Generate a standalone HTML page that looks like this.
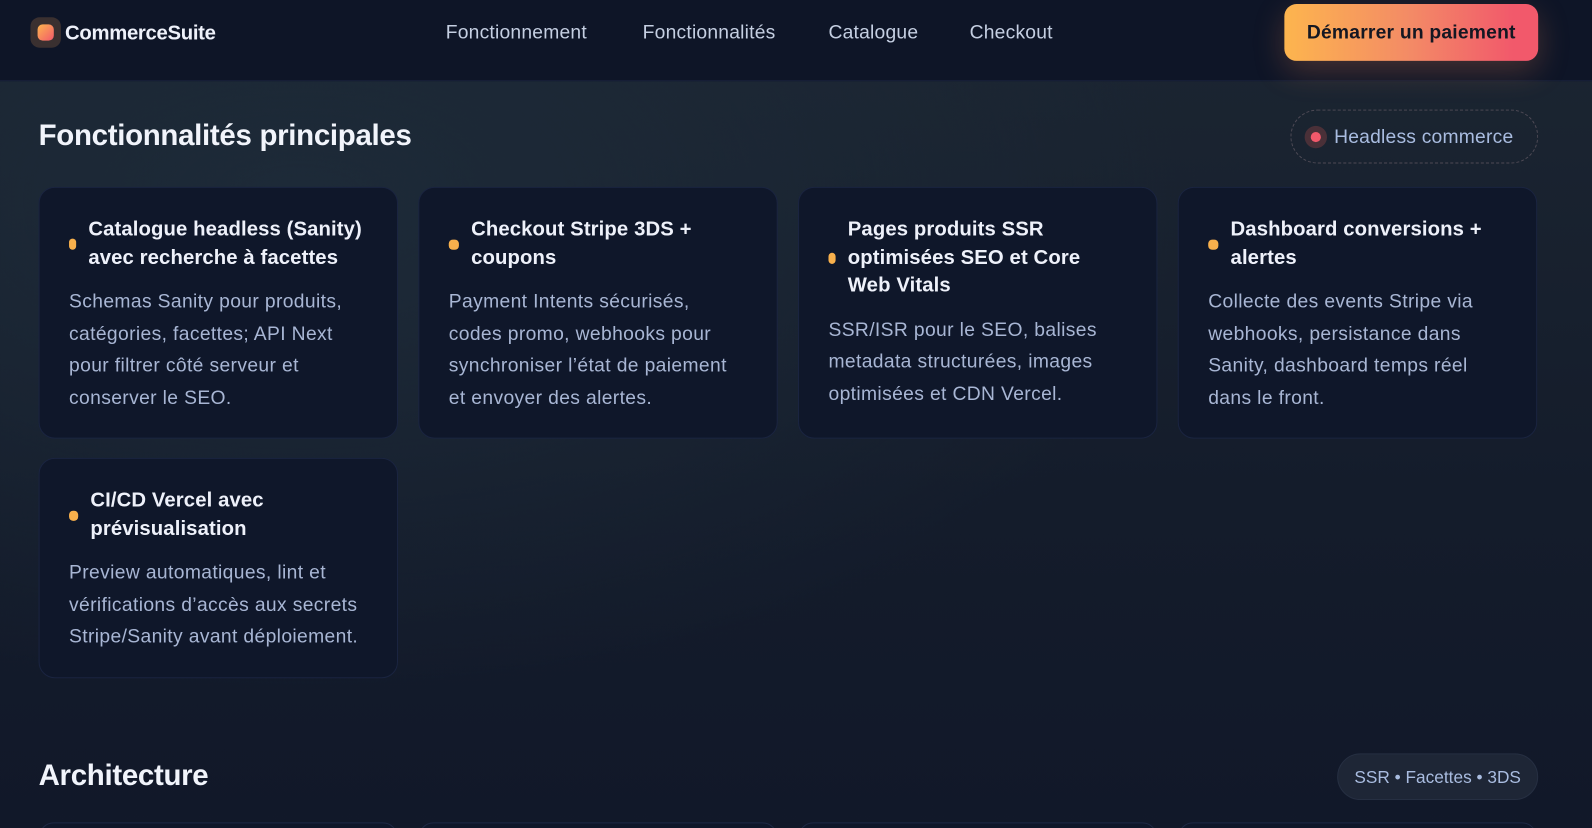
<!DOCTYPE html>
<html><head><meta charset="utf-8"><style>
*{box-sizing:border-box;margin:0;padding:0}
html,body{width:1592px;height:828px;overflow:hidden}
body{font-family:"Liberation Sans",sans-serif;background:radial-gradient(ellipse 900px 500px at 300px 200px,#1d2a38 0%,transparent 100%),linear-gradient(180deg,#1c2632 0%,#141c2b 60%,#111829 100%);color:#e8edf8;position:relative}
#w{position:absolute;left:0;top:0;width:1568px;height:816px;transform:scale(1.0153);transform-origin:0 0}
header{position:absolute;left:0;top:0;width:1568px;height:80px;background:#0e1527;border-bottom:1px solid #18223a}
.logo{position:absolute;left:30px;top:17px;width:30px;height:30px;border-radius:9px;background:#3a3030}
.logo i{position:absolute;left:7px;top:7px;width:16px;height:16px;border-radius:5px;background:linear-gradient(135deg,#fdb54e,#f2596b)}
.brand{position:absolute;left:64px;top:22px;font-size:20px;font-weight:700;letter-spacing:-0.3px;color:#eef1fa}
nav a{position:absolute;top:22px;font-size:19px;color:#c5cfe2;text-decoration:none;letter-spacing:0.2px}
.btn{position:absolute;left:1265px;top:4px;width:250px;height:56px;border-radius:12px;background:linear-gradient(90deg,#fdb54e,#f38a66 50%,#f2596b 90%);color:#141722;font-weight:700;font-size:19px;text-align:center;line-height:57px;box-shadow:0 10px 30px rgba(240,130,80,.25);letter-spacing:0.2px}
h2{position:absolute;left:38px;font-size:29px;font-weight:700;letter-spacing:-0.3px;color:#f1f4fb}
.pill{position:absolute;left:1271px;top:108px;width:244px;height:53px;border:1px dashed #4e4a55;border-radius:27px;font-size:19px;color:#a9bce0;padding-left:42px;line-height:53px;letter-spacing:0.2px}
.pill i{position:absolute;left:13px;top:15px;width:22px;height:22px;border-radius:50%;background:#4a3038}
.pill i:after{content:"";position:absolute;left:6px;top:6px;width:10px;height:10px;border-radius:50%;background:#f2596b}
.card{position:absolute;width:354px;background:#0f172a;border:1px solid #1a2440;border-radius:16px;padding:28px 28px 0 29px}
.t{display:flex;align-items:center;font-size:20px;font-weight:700;line-height:27.5px;color:#eef1fa;letter-spacing:0.1px;padding-right:4px}
.t b{flex:0 0 auto;width:7px;height:11px;border-radius:4px;background:#f8b04c;margin-right:12px}
.d{font-size:19px;line-height:31.5px;color:#a8b6d4;margin-top:14px;letter-spacing:0.35px}
.pill2{position:absolute;left:1317px;top:742px;width:198px;height:46px;border-radius:23px;background:#1e2636;border:1px solid #262f42;font-size:17px;color:#a9bce0;text-align:center;line-height:46px}
.stub{position:absolute;top:810px;width:354px;height:30px;border:1px solid #1e2844;border-radius:16px;background:#0f172a}
</style></head><body><div id="w">
<header>
<div class="logo"><i></i></div><div class="brand">CommerceSuite</div>
<nav><a style="left:439px">Fonctionnement</a><a style="left:633px">Fonctionnalités</a><a style="left:816px">Catalogue</a><a style="left:955px">Checkout</a></nav>
<div class="btn">Démarrer un paiement</div>
</header>
<h2 style="top:118px">Fonctionnalités principales</h2>
<div class="pill"><i></i>Headless commerce</div>
<div class="card" style="left:38px;top:184px;height:248px"><div class="t"><b></b>Catalogue headless (Sanity) avec recherche à facettes</div><div class="d">Schemas Sanity pour produits, catégories, facettes; API Next pour filtrer côté serveur et conserver le SEO.</div></div>
<div class="card" style="left:412px;top:184px;height:248px"><div class="t"><b style="width:10px;height:10px"></b>Checkout Stripe 3DS + coupons</div><div class="d">Payment Intents sécurisés, codes promo, webhooks pour synchroniser l’état de paiement et envoyer des alertes.</div></div>
<div class="card" style="left:786px;top:184px;height:248px"><div class="t" style="padding-right:24px"><b></b>Pages produits SSR optimisées SEO et Core Web Vitals</div><div class="d">SSR/ISR pour le SEO, balises metadata structurées, images optimisées et CDN Vercel.</div></div>
<div class="card" style="left:1160px;top:184px;height:248px"><div class="t"><b style="width:10px;height:10px"></b>Dashboard conversions + alertes</div><div class="d">Collecte des events Stripe via webhooks, persistance dans Sanity, dashboard temps réel dans le front.</div></div>
<div class="card" style="left:38px;top:451px;height:217px"><div class="t"><b style="width:9px;height:10px"></b>CI/CD Vercel avec prévisualisation</div><div class="d">Preview automatiques, lint et vérifications d’accès aux secrets Stripe/Sanity avant déploiement.</div></div>
<h2 style="top:748px">Architecture</h2>
<div class="pill2">SSR • Facettes • 3DS</div>
<div class="stub" style="left:38px"></div><div class="stub" style="left:412px"></div><div class="stub" style="left:786px"></div><div class="stub" style="left:1160px"></div>
</div></body></html>
